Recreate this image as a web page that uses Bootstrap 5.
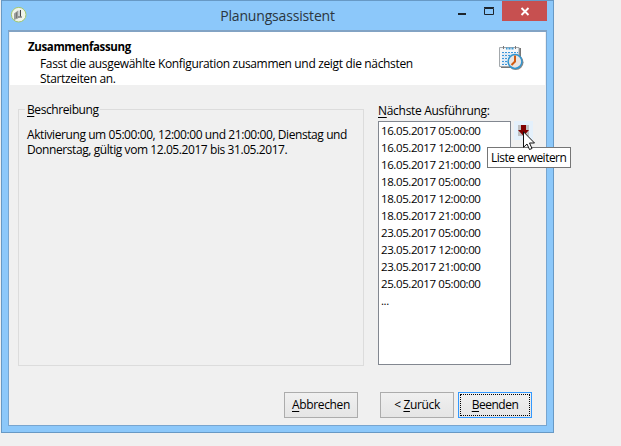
<!DOCTYPE html>
<html lang="de">
<head>
<meta charset="utf-8">
<title>Planungsassistent</title>
<meta name="viewport" content="width=device-width, initial-scale=1">
<link href="https://cdn.jsdelivr.net/npm/bootstrap@5.3.0/dist/css/bootstrap.min.css" rel="stylesheet">
<style>
body{background:#f0f0f0;font-family:"Open Sans","Noto Sans",sans-serif;font-size:12px;line-height:15px;color:#000;letter-spacing:-.3px;overflow:hidden}
svg{display:block;flex:none}
.win{width:553px;height:433px;margin-left:1px;background:#8cc8fa;border:1px solid #6799c5;padding:0 6px 6px}
.titlebar{height:29px}
.app-icon{margin:5px 0 0 2px}
.win-title{left:0;right:0;top:5px;font-size:14px;line-height:20px;color:#2b3640;letter-spacing:-.17px}
.controls{top:0;right:0}
.btn-close-win{width:45px;height:20px;background:#c75050}
.client{height:396px;background:#f0f0f0;border:1px solid #78a5cf;border-top:2px solid #82a3c4}
.banner{height:53px;background:#fff;margin:0 1px;padding:7px 21px 0 18px}
.banner h1{font-size:11.5px;line-height:15px;letter-spacing:-.36px}
.banner p{padding-left:12px;margin-top:2px;letter-spacing:-.34px}
.banner svg{margin-top:7px}
.main{padding:18px 13px 0 9px}
.group{width:346px;height:257px;margin-top:6px;border:1px solid #dcdcdc;padding:0 8px}
.group legend{font-size:12px;line-height:15px;margin-top:-8px;background:#f0f0f0;width:75px;margin-left:-2px;padding-left:2px;float:none;letter-spacing:-.42px}
.group p{margin-top:10px;letter-spacing:-.42px}
.runs-label{height:18px}
.runs{width:133px;height:244px;background:#fff;border:1px solid #828790;padding:0 2px;font-size:11.5px;letter-spacing:-.4px}
.runs li{line-height:17px;height:17px}
.tool{width:19px;height:19px;background:#e4f0fb;margin:18px 0 0 3px}
.foot{margin-top:26px;padding-right:1px}
.push{width:74px;height:26px;border:1px solid #acacac;border-radius:0;background:linear-gradient(#f0f0f0,#e5e5e5);font-size:12px;line-height:15px;color:#000;letter-spacing:-.35px;padding:0 0 2px}
.push.back{margin:0 4px 0 22px}
.push.default{border-color:#3399ff;outline:1px dotted #000;outline-offset:-3px;letter-spacing:-.5px}
.pointer{left:523px;top:131px;z-index:3}
.tip{left:487px;top:147px;width:84px;height:21px;border:1px solid #767676;background:#fff;padding:2px 3px;z-index:2;letter-spacing:-.52px}
u{text-underline-offset:2px;text-decoration-thickness:1px}
</style>
<script src="https://cdn.jsdelivr.net/npm/bootstrap@5.3.0/dist/js/bootstrap.bundle.min.js"></script>
</head>
<body>
<div class="win">
  <header class="titlebar position-relative d-flex justify-content-between align-items-start">
    <svg class="app-icon" width="18" height="18" viewBox="0 0 18 18"><circle cx="8.700" cy="8.700" r="7.300" fill="#f0f4ea" stroke="#a5c86c"/><path d="M4 7.500 8 4.500v8l-4 1.500z" fill="#9a9d9b"/><path d="M8 4.500h3v6l-3 2z" fill="#cdd0cf"/><path d="M10.500 4v6.500" stroke="#444" fill="none"/><path d="M6.500 6.500V12" stroke="#777"/><path d="M8 11h4" stroke="#555"/></svg>
    <div class="win-title position-absolute text-center">Planungsassistent</div>
    <div class="controls position-absolute d-flex">
      <svg width="45" height="20" viewBox="0 0 45 20"><path d="M1 12h8v2H1z" fill="#1d252c"/><path d="M27.500 7.500h9v6h-9zM27 6.500h10" fill="none" stroke="#1d252c"/></svg>
      <div class="btn-close-win"><svg width="45" height="20" viewBox="0 0 45 20"><path d="m19.500 7 7 7m0-7-7 7" stroke="#fff" stroke-width="1.900"/></svg></div>
    </div>
  </header>
  <div class="client">
    <div class="banner d-flex justify-content-between">
      <div><h1 class="fw-bold mb-0">Zusammenfassung</h1><p class="mb-0">Fasst die ausgewählte Konfiguration zusammen und zeigt die nächsten<br>Startzeiten an.</p></div>
      <svg width="25" height="25" viewBox="0 0 25 25">
        <path d="M2 2h20v20H2z" fill="#777"/><path d="M.5 1.500h19.500v19H.5z" fill="#f4f6f8" stroke="#a3a8ac"/>
        <path d="M4.500 0v3M16.500 0v3" stroke="#777"/><path d="M7 2.500h8" stroke="#3c9bd5" stroke-width="2" stroke-dasharray="1 .5"/>
        <path d="M3 6.500h16M3 9.500h16M3 12.500h16M3 15.500h16M3 18.500h9" stroke="#3c96dc" stroke-dasharray="2 1"/><path d="M3 8h16M3 11h16M3 14h16M3 17h10" stroke="#c6dcf0"/>
        <circle cx="16.700" cy="16.200" r="7.800" fill="#888"/><circle cx="16" cy="15.500" r="6.900" fill="#e9e4e2" stroke="#3295cf" stroke-width="1.500"/><path d="M16 9.500v6l-3.500 3.500" fill="none" stroke="#d05a10" stroke-width="2"/>
      </svg>
    </div>
    <main class="main">
      <div class="d-flex">
        <div class="group"><legend class="mb-0"><u>B</u>eschreibung</legend>
          <p class="mb-0 text-nowrap">Aktivierung um 05:00:00, 12:00:00 und 21:00:00, Dienstag und<br>Donnerstag, gültig vom 12.05.2017 bis 31.05.2017.</p></div>
        <div class="ms-auto d-flex">
          <div><div class="runs-label"><u>N</u>ächste Ausführung:</div>
            <ul class="runs list-unstyled mb-0"><li>16.05.2017 05:00:00</li><li>16.05.2017 12:00:00</li><li>16.05.2017 21:00:00</li><li>18.05.2017 05:00:00</li><li>18.05.2017 12:00:00</li><li>18.05.2017 21:00:00</li><li>23.05.2017 05:00:00</li><li>23.05.2017 12:00:00</li><li>23.05.2017 21:00:00</li><li>25.05.2017 05:00:00</li><li>...</li></ul></div>
          <div class="tool"><svg width="19" height="19" viewBox="0 0 19 19"><path d="M4 4h11v11H4z" fill="#bfc1c3"/><path d="M7 4h5v5h3l-5.500 6L4 9h3z" fill="#800000"/></svg></div>
        </div>
      </div>
      <div class="d-flex justify-content-end foot">
        <button class="btn push"><u>A</u>bbrechen</button><button class="btn push back">&lt; <u>Z</u>urück</button><button class="btn push default"><u>B</u>eenden</button>
      </div>
    </main>
  </div>
</div>
<svg class="pointer position-absolute" width="13" height="20" viewBox="0 0 13 20"><path d="M.5.8v15.500l3.500-3.300 2.500 5.500 2.500-1-2.500-5.500H11.500z" fill="#fff" stroke="#111"/></svg>
<div class="tip position-absolute text-nowrap">Liste erweitern</div>
</body>
</html>
